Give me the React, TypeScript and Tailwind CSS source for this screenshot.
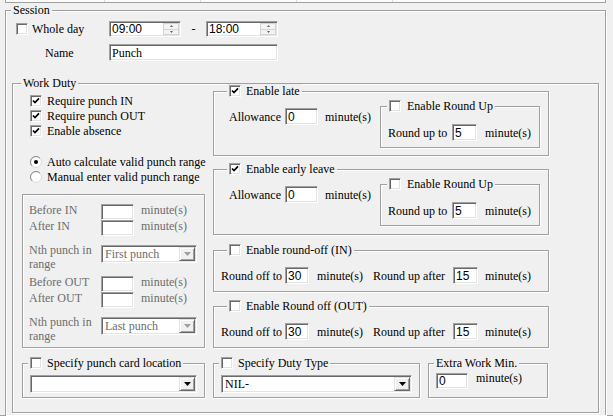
import React from "react";

const sunken =
  "bg-white border border-t-[#a0a0a0] border-l-[#a0a0a0] border-b-white border-r-white shadow-[inset_1px_1px_0_#696969,inset_-1px_-1px_0_#e3e3e3]";
const sans = "font-['Liberation_Sans',Arial,sans-serif]";

function Check({ checked = false, className = "" }: { checked?: boolean; className?: string }) {
  return (
    <span className={`w-[12px] h-[12px] shrink-0 flex items-center justify-center ${sunken} ${className}`}>
      {checked && (
        <svg width="8" height="8" viewBox="0 0 8 8">
          <path d="M1 3.5L3 5.6L7 1.4" stroke="#000" strokeWidth="1.7" fill="none" />
        </svg>
      )}
    </span>
  );
}

function Radio({ checked = false }: { checked?: boolean }) {
  return (
    <svg width="12" height="12" viewBox="0 0 12 12" className="shrink-0">
      <circle cx="6" cy="6" r="5.5" fill="#fff" stroke="#d8d8d8" />
      <path d="M2.1 9.9A5.5 5.5 0 0 1 9.9 2.1" stroke="#8a8a8a" fill="none" />
      {checked && <circle cx="6" cy="6" r="2" fill="#000" />}
    </svg>
  );
}

function Group({
  className = "",
  legendClass = "",
  legend,
  children,
}: {
  className?: string;
  legendClass?: string;
  legend?: React.ReactNode;
  children?: React.ReactNode;
}) {
  return (
    <div
      className={`relative shrink-0 border border-[#a0a0a0] shadow-[inset_1px_1px_0_#fff,1px_1px_0_#fff] ${className}`}
    >
      {legend && (
        <div
          className={`absolute -top-[8px] h-[14px] px-[2px] bg-[#f0f0f0] flex items-center whitespace-nowrap ${legendClass}`}
        >
          {legend}
        </div>
      )}
      {children}
    </div>
  );
}

function Box({ className = "", text = "", serif = false }: { className?: string; text?: string; serif?: boolean }) {
  return (
    <div className={`shrink-0 flex items-center text-black ${sunken} ${className}`}>
      <span className={`pl-[2px] whitespace-nowrap ${serif ? "" : sans}`}>{text}</span>
    </div>
  );
}

function Arrow({ color }: { color: string }) {
  return (
    <svg width="7" height="4" viewBox="0 0 7 4">
      <path d="M0 0H7L3.5 4Z" fill={color} />
    </svg>
  );
}

function Select({
  className = "",
  text = "",
  disabled = false,
}: {
  className?: string;
  text?: string;
  disabled?: boolean;
}) {
  return (
    <div className={`shrink-0 h-[18px] p-[1px] flex items-center ${sunken} ${className}`}>
      <span className={`flex-1 pl-[2px] whitespace-nowrap ${disabled ? "text-[#6d6d6d]" : "text-black"}`}>{text}</span>
      <span className="w-[16px] h-[14px] flex items-center justify-center bg-[#f0f0f0] border border-t-[#e3e3e3] border-l-[#e3e3e3] border-b-[#696969] border-r-[#696969] shadow-[inset_1px_1px_0_#fff,inset_-1px_-1px_0_#a0a0a0]">
        <Arrow color={disabled ? "#a0a0a0" : "#000"} />
      </span>
    </div>
  );
}

function TimeBox({ value }: { value: string }) {
  return (
    <div className={`w-[72px] h-[16px] shrink-0 flex items-center ${sunken}`}>
      <span className={`flex-1 pl-[2px] ${sans}`}>{value}</span>
      <span className="w-[16px] h-[12px] mr-[1px] flex flex-col">
        <span className="flex-1 flex items-center justify-center bg-[#f3f3f3] border border-[#d4d4d4]">
          <svg width="3" height="2" viewBox="0 0 3 2">
            <path d="M0 2H3L1.5 0Z" fill="#606060" />
          </svg>
        </span>
        <span className="flex-1 flex items-center justify-center bg-[#f3f3f3] border border-t-0 border-[#d4d4d4]">
          <svg width="3" height="2" viewBox="0 0 3 2">
            <path d="M0 0H3L1.5 2Z" fill="#606060" />
          </svg>
        </span>
      </span>
    </div>
  );
}

function CheckLegend({ label, checked = false }: { label: string; checked?: boolean }) {
  return (
    <>
      <Check checked={checked} />
      <span className="ml-[5px]">{label}</span>
    </>
  );
}

function LateGroup({ title, checked, className }: { title: string; checked: boolean; className: string }) {
  return (
    <Group className={className} legendClass="left-[13px]" legend={<CheckLegend label={title} checked={checked} />}>
      <div className="flex items-start">
        <div className="w-[166px] shrink-0 mt-[16px] pl-[15px] flex items-center h-[17px]">
          <span className="w-[56px] shrink-0">Allowance</span>
          <Box className="w-[33px] h-[17px]" text="0" />
          <span className="ml-[7px]">minute(s)</span>
        </div>
        <Group
          className="mt-[14px] w-[160px] h-[42px]"
          legendClass="left-[6px]"
          legend={
            <>
              <Check />
              <span className="ml-[6px]">Enable Round Up</span>
            </>
          }
        >
          <div className="mt-[17px] pl-[7px] flex items-center h-[17px]">
            <span className="w-[64px] shrink-0">Round up to</span>
            <Box className="w-[25px] h-[17px]" text="5" />
            <span className="ml-[8px]">minute(s)</span>
          </div>
        </Group>
      </div>
    </Group>
  );
}

function RoundGroup({ title, className }: { title: string; className: string }) {
  return (
    <Group className={className} legendClass="left-[13px]" legend={<CheckLegend label={title} />}>
      <div className="mt-[16px] pl-[7px] flex items-center h-[17px]">
        <span className="w-[64px] shrink-0">Round off to</span>
        <Box className="w-[24px] h-[17px]" text="30" />
        <span className="ml-[8px] w-[56px] shrink-0">minute(s)</span>
        <span className="w-[80px] shrink-0">Round up after</span>
        <Box className="w-[25px] h-[17px]" text="15" />
        <span className="ml-[7px]">minute(s)</span>
      </div>
    </Group>
  );
}

function RangeRow({ label }: { label: string }) {
  return (
    <div className="flex items-center h-[16px]">
      <span className="w-[78px] shrink-0 pl-[6px] mb-[4px]">{label}</span>
      <Box className="w-[33px] h-[16px]" />
      <span className="ml-[7px] mb-[4px]">minute(s)</span>
    </div>
  );
}

function NthRow({ value, className }: { value: string; className: string }) {
  return (
    <div className={`h-[18px] flex items-start ${className}`}>
      <span className="w-[78px] shrink-0 pl-[6px] -mt-[2px] leading-[14px] flex flex-col">
        <span>Nth punch in</span>
        <span>range</span>
      </span>
      <Select className="w-[96px]" text={value} disabled />
    </div>
  );
}

export default function App() {
  return (
    <div className="w-[613px] h-[417px] bg-[#f0f0f0] overflow-hidden flex flex-col font-['Liberation_Serif','Times_New_Roman',serif] text-[12px] leading-[14px] text-black">
      {/* bottom edge of the list above */}
      <div className="ml-[5px] w-[601px] h-[3px] shrink-0 bg-[#fbfbfb] border-x border-b border-[#a0a0a0] flex">
        <div className="w-[99px] border-r border-[#dadada]" />
        <div className="w-[96px] border-r border-[#dadada]" />
        <div className="w-[96px] border-r border-[#dadada]" />
        <div className="w-[96px] border-r border-[#dadada]" />
      </div>

      <Group
        className="ml-[5px] mt-[7px] w-[601px] h-[405px] border-b-0 pt-[10px]"
        legendClass="left-[5px]"
        legend="Session"
      >
        <div className="flex items-center h-[16px]">
          <Check className="ml-[10px]" />
          <span className="ml-[4px] w-[77px] shrink-0">Whole day</span>
          <TimeBox value="09:00" />
          <span className="w-[25px] shrink-0 text-center">-</span>
          <TimeBox value="18:00" />
        </div>
        <div className="mt-[7px] flex items-center h-[17px]">
          <span className="ml-[39px] w-[64px] shrink-0">Name</span>
          <Box className="w-[169px] h-[17px]" text="Punch" serif />
        </div>

        <Group className="ml-[6px] mt-[22px] w-[587px] h-[330px]" legendClass="left-[8px]" legend="Work Duty">
          <div className="flex">
            {/* left column */}
            <div className="w-[200px] shrink-0 flex flex-col">
              <div className="mt-[9px] ml-[17px] flex flex-col">
                <div className="h-[15px] flex items-center">
                  <Check checked />
                  <span className="ml-[5px]">Require punch IN</span>
                </div>
                <div className="h-[15px] flex items-center">
                  <Check checked />
                  <span className="ml-[5px]">Require punch OUT</span>
                </div>
                <div className="h-[16px] flex items-center">
                  <Check checked />
                  <span className="ml-[5px]">Enable absence</span>
                </div>
              </div>
              <div className="mt-[15px] ml-[17px] flex flex-col">
                <div className="h-[15px] flex items-center">
                  <Radio checked />
                  <span className="ml-[5px]">Auto calculate valid punch range</span>
                </div>
                <div className="h-[15px] flex items-center">
                  <Radio />
                  <span className="ml-[5px]">Manual enter valid punch range</span>
                </div>
              </div>
              <Group className="mt-[10px] ml-[9px] w-[183px] h-[154px] pt-[9px] text-[#6d6d6d]">
                <RangeRow label="Before IN" />
                <RangeRow label="After IN" />
                <NthRow value="First punch" className="mt-[9px]" />
                <div className="mt-[13px]">
                  <RangeRow label="Before OUT" />
                  <RangeRow label="After OUT" />
                </div>
                <NthRow value="Last punch" className="mt-[9px]" />
              </Group>
            </div>

            {/* right column */}
            <div className="w-[336px] shrink-0 flex flex-col">
              <LateGroup title="Enable late" checked className="mt-[7px] w-[336px] h-[65px]" />
              <LateGroup title="Enable early leave" checked className="mt-[13px] w-[336px] h-[66px]" />
              <RoundGroup title="Enable round-off (IN)" className="mt-[15px] w-[336px] h-[42px]" />
              <RoundGroup title="Enable Round off (OUT)" className="mt-[14px] w-[336px] h-[42px]" />
            </div>
          </div>

          <div className="mt-[15px] flex items-start">
            <Group
              className="ml-[9px] w-[183px] h-[35px]"
              legendClass="left-[5px]"
              legend={<CheckLegend label="Specify punch card location" />}
            >
              <Select className="ml-[7px] mt-[11px] w-[167px]" />
            </Group>
            <Group
              className="ml-[8px] w-[207px] h-[35px]"
              legendClass="left-[5px]"
              legend={<CheckLegend label="Specify Duty Type" />}
            >
              <Select className="ml-[7px] mt-[11px] w-[191px]" text="NIL-" />
            </Group>
            <Group className="ml-[8px] w-[120px] h-[35px]" legendClass="left-[5px]" legend="Extra Work Min.">
              <div className="mt-[9px] ml-[7px] flex items-start">
                <Box className="w-[32px] h-[16px]" text="0" />
                <span className="ml-[8px] -mt-[2px]">minute(s)</span>
              </div>
            </Group>
          </div>
        </Group>
      </Group>

      <div className="w-[613px] h-[2px] shrink-0 border-t border-[#a0a0a0] bg-white" />
    </div>
  );
}
